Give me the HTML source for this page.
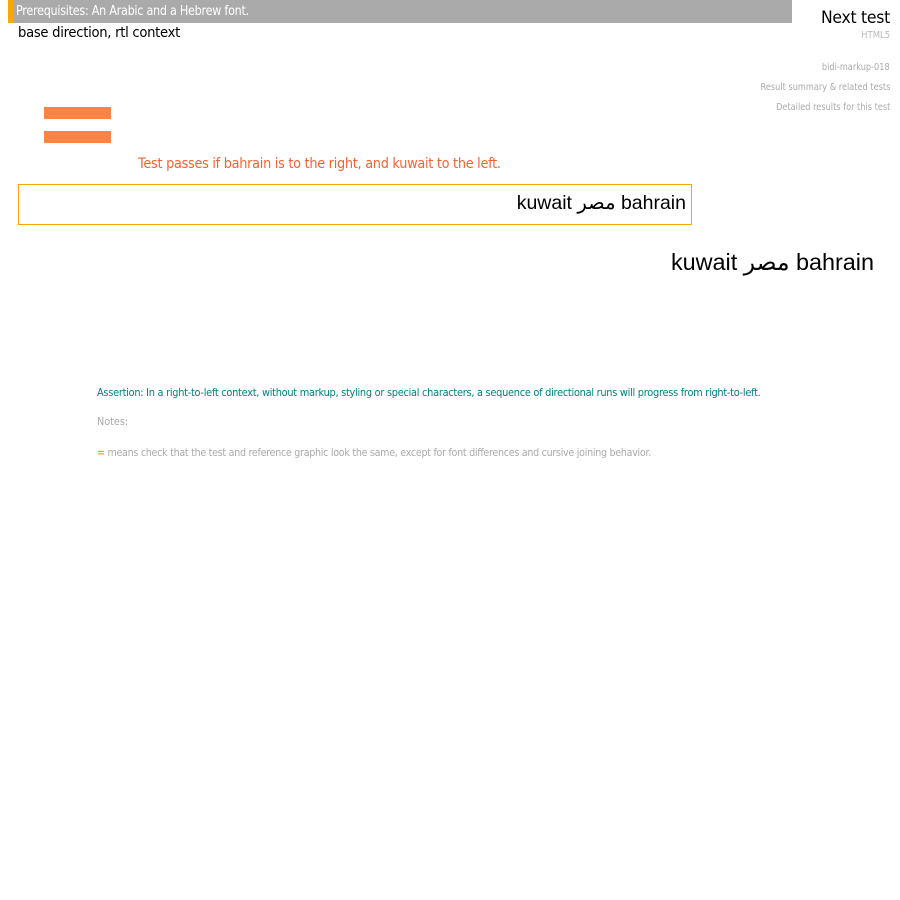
<!DOCTYPE html>
<html><head><meta charset="utf-8"><style>
body{margin:0;width:900px;height:900px;background:#fff;font-family:"DejaVu Sans","Liberation Sans",sans-serif;position:relative;overflow:hidden}
.a{position:absolute;white-space:nowrap}
.l{transform-origin:0 0}
.r{transform-origin:100% 0}
</style></head><body>
<div class="a" style="left:8px;top:0;width:784px;height:23px;background:#aaa"></div>
<div class="a" style="left:8px;top:0;width:5px;height:23px;background:#f9a800"></div>
<div class="a l" style="left:16px;top:4px;font-size:13px;color:#fff;letter-spacing:-0.3px;transform:scaleX(0.86)">Prerequisites: An Arabic and a Hebrew font.</div>
<div class="a l" style="left:18px;top:25px;font-size:14px;color:#000;letter-spacing:-0.3px;transform:scaleX(0.94)">base direction, rtl context</div>
<div class="a r" style="right:10px;top:8px;font-size:17px;color:#000;letter-spacing:-0.3px;transform:scaleX(0.92)">Next test</div>
<div class="a r" style="right:10px;top:30px;font-size:10px;color:#bbb;transform:scaleX(0.85)">HTML5</div>
<div class="a r" style="right:10px;top:62px;font-size:10px;color:#aaa;transform:scaleX(0.82)">bidi-markup-018</div>
<div class="a r" style="right:10px;top:82px;font-size:10px;color:#aaa;transform:scaleX(0.82)">Result summary &amp; related tests</div>
<div class="a r" style="right:10px;top:102px;font-size:10px;color:#aaa;transform:scaleX(0.82)">Detailed results for this test</div>
<div class="a" style="left:44px;top:107px;width:67px;height:12px;background:#ff8444"></div>
<div class="a" style="left:44px;top:131px;width:67px;height:12px;background:#ff8444"></div>
<div class="a l" style="left:138px;top:156px;font-size:14px;color:#f06432;letter-spacing:-0.3px;transform:scaleX(0.92)">Test passes if bahrain is to the right, and kuwait to the left.</div>
<div class="a" style="left:18px;top:184px;width:672px;height:39px;border:1px solid #f9a800"></div>
<div class="a" style="right:214px;top:191px;font-family:'Liberation Sans','DejaVu Sans',sans-serif;font-size:19.5px;color:#000" dir="rtl">bahrain مصر kuwait</div>
<div class="a" style="right:26px;top:248px;font-family:'Liberation Sans','DejaVu Sans',sans-serif;font-size:23.4px;color:#000" dir="rtl">bahrain مصر kuwait</div>
<div class="a l" style="left:97px;top:387px;font-size:10.5px;color:#008080;letter-spacing:-0.3px;transform:scaleX(0.934)">Assertion: In a right-to-left context, without markup, styling or special characters, a sequence of directional runs will progress from right-to-left.</div>
<div class="a l" style="left:97px;top:416px;font-size:10.5px;color:#aaa;transform:scaleX(0.92)">Notes:</div>
<div class="a l" style="left:97px;top:447px;font-size:10.5px;color:#aaa;letter-spacing:-0.3px;transform:scaleX(0.907)"><b style="color:#f9a800">=</b> means check that the test and reference graphic look the same, except for font differences and cursive joining behavior.</div>
</body></html>
